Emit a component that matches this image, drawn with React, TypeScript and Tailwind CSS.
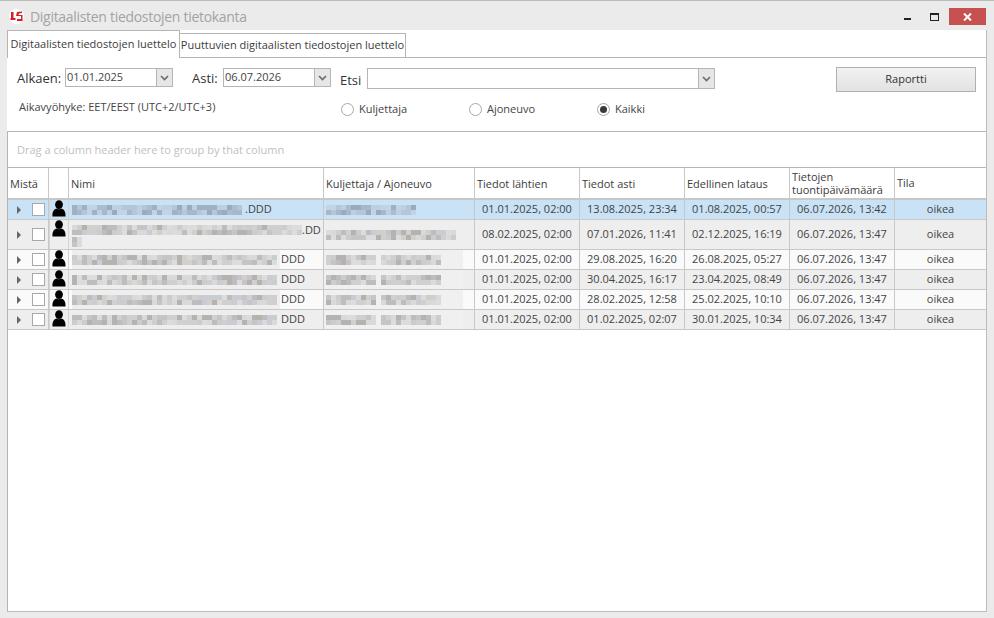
import React from 'react';

const GRID = 'grid grid-cols-[41px_20px_255px_151px_105px_105px_105px_105px_91px]';
const CELL = 'border-r border-[#c8c8c8]';

const LIGHT = ['#d9d9d9', '#cfcfcf', '#c6c4c6', '#bdbcbf', '#d2d0cd', '#c9ccd0', '#b5b2b0', '#dcdcdc'];
const BLUE = ['#a9bdcf', '#b4c7d8', '#9fb2c4', '#bcd0e0', '#a8b8c8', '#c0d4e4', '#98acbe'];

// pixelated stand-in for the censored names
const Mosaic = ({ w, h, seed, palette = LIGHT }: { w: number; h: number; seed: number; palette?: string[] }) => {
  const cols = Math.ceil(w / 5);
  const rows = Math.ceil(h / 5);
  const cells = [];
  for (let i = 0; i < cols * rows; i++) {
    const n = Math.abs(Math.sin((i + 1) * 12.9898 + seed * 78.233) * 43758.5453);
    cells.push(palette[Math.floor(n) % palette.length]);
  }
  return (
    <div className="flex flex-wrap overflow-hidden shrink-0" style={{ width: w, height: h }}>
      {cells.map((c, i) => (
        <div key={i} className="w-[5px] h-[5px]" style={{ background: c }} />
      ))}
    </div>
  );
};

const PersonIcon = () => (
  <svg width="14" height="17" viewBox="0 0 14 17" className="shrink-0">
    <ellipse cx="7" cy="4.6" rx="3.9" ry="4.4" fill="#000" />
    <path d="M0.5 16.5 C0.2 12 1.6 9.6 4.4 8.6 C6 9.6 8 9.6 9.6 8.6 C12.4 9.6 13.8 12 13.5 16.5 Z" fill="#000" />
  </svg>
);

const Chevron = () => (
  <svg width="9" height="6" viewBox="0 0 9 6">
    <path d="M1 1 L4.5 4.5 L8 1" fill="none" stroke="#6b6b6b" strokeWidth="1.6" />
  </svg>
);

const ComboButton = ({ w }: { w: string }) => (
  <div className={`${w} self-stretch bg-[#e6e6e6] border-l border-[#b5b5b5] flex items-center justify-center`}>
    <Chevron />
  </div>
);

const Radio = ({ label, checked }: { label: string; checked?: boolean }) => (
  <div className="flex items-center gap-[5px] w-[128px]">
    <div className="w-[13px] h-[13px] rounded-full border border-[#a8a8a8] bg-white flex items-center justify-center">
      {checked && <div className="w-[7px] h-[7px] rounded-full bg-[#3a3a3a]" />}
    </div>
    <span>{label}</span>
  </div>
);

type Row = {
  h: string;
  bg: string;
  from: string;
  to: string;
  last: string;
  added: string;
  name: React.ReactNode;
  driver: React.ReactNode;
};

const HaloName = ({ w, seed, blockW }: { w: number; seed: number; blockW: number }) => (
  <div className="flex items-center h-full pl-[3px]">
    <div className="bg-[#eeeeee] h-full flex items-center" style={{ width: w }}>
      <Mosaic w={blockW} h={10} seed={seed} />
    </div>
    <span className="ml-[1px]">DDD</span>
  </div>
);

const HaloDriver = ({ seed }: { seed: number }) => (
  <div className="h-full w-[139px] bg-[#f0f0f0] flex items-center pl-[2px]">
    <Mosaic w={50} h={10} seed={seed} />
    <div className="w-[5px]" />
    <Mosaic w={60} h={10} seed={seed + 1} />
  </div>
);

const rows: Row[] = [
  {
    h: 'h-[20px]',
    bg: 'bg-[#c9e2f5]',
    from: '01.01.2025, 02:00',
    to: '13.08.2025, 23:34',
    last: '01.08.2025, 00:57',
    added: '06.07.2026, 13:42',
    name: (
      <div className="flex items-center h-full pl-[3px]">
        <Mosaic w={173} h={10} seed={1} palette={BLUE} />
        <span>.DDD</span>
      </div>
    ),
    driver: (
      <div className="flex items-center h-full pl-[2px]">
        <Mosaic w={90} h={10} seed={2} palette={BLUE} />
      </div>
    ),
  },
  {
    h: 'h-[30px]',
    bg: 'bg-[#eeeeee]',
    from: '08.02.2025, 02:00',
    to: '07.01.2026, 11:41',
    last: '02.12.2025, 16:19',
    added: '06.07.2026, 13:47',
    name: (
      <div className="pl-[3px] pt-[5px]">
        <div className="flex items-center h-[10px]">
          <Mosaic w={230} h={10} seed={3} />
          <span>.DD</span>
        </div>
        <div className="mt-[2px]">
          <Mosaic w={10} h={10} seed={4} />
        </div>
      </div>
    ),
    driver: (
      <div className="flex items-center h-full pl-[2px]">
        <Mosaic w={130} h={10} seed={5} />
      </div>
    ),
  },
  {
    h: 'h-[20px]',
    bg: 'bg-[#fafafa]',
    from: '01.01.2025, 02:00',
    to: '29.08.2025, 16:20',
    last: '26.08.2025, 05:27',
    added: '06.07.2026, 13:47',
    name: <HaloName w={208} seed={6} blockW={205} />,
    driver: <HaloDriver seed={7} />,
  },
  {
    h: 'h-[20px]',
    bg: 'bg-[#eeeeee]',
    from: '01.01.2025, 02:00',
    to: '30.04.2025, 16:17',
    last: '23.04.2025, 08:49',
    added: '06.07.2026, 13:47',
    name: <HaloName w={208} seed={9} blockW={205} />,
    driver: <HaloDriver seed={10} />,
  },
  {
    h: 'h-[20px]',
    bg: 'bg-[#fafafa]',
    from: '01.01.2025, 02:00',
    to: '28.02.2025, 12:58',
    last: '25.02.2025, 10:10',
    added: '06.07.2026, 13:47',
    name: <HaloName w={208} seed={12} blockW={205} />,
    driver: <HaloDriver seed={13} />,
  },
  {
    h: 'h-[20px]',
    bg: 'bg-[#eeeeee]',
    from: '01.01.2025, 02:00',
    to: '01.02.2025, 02:07',
    last: '30.01.2025, 10:34',
    added: '06.07.2026, 13:47',
    name: <HaloName w={208} seed={15} blockW={205} />,
    driver: <HaloDriver seed={16} />,
  },
];

const Head = ({ children }: { children: React.ReactNode }) => (
  <div className={`${CELL} flex items-center pl-[2px] leading-[13px] text-[#3c3c3c]`}>{children}</div>
);

const App = () => {
  return (
    <div className="w-[994px] h-[618px] flex flex-col bg-[#ebebeb] border-t border-[#bdbdbd] overflow-hidden font-['Open_Sans','Noto_Sans',sans-serif] text-[11px] text-[#444444]">
      {/* Title bar */}
      <div className="h-[29px] shrink-0 flex items-center pl-[9px] pt-[1px]">
        <div className="w-[15px] h-[15px] rounded-full bg-white flex items-center justify-center">
          <svg width="13" height="11" viewBox="0 0 13 11">
            <path d="M1 1 V7 H0.5 V9 H5.5 V7 H3.5 V1 Z M7 1 L6 5 H11 V8 H7 V10 H12.5 V4 H8.5 L9 2.5 L12 2 V0.5 Z" fill="#d3202a" />
          </svg>
        </div>
        <span className="ml-[6px] text-[14px] text-[#a3a3a3] tracking-[-0.3px]">Digitaalisten tiedostojen tietokanta</span>
        <div className="ml-auto flex items-start h-full">
          <div className="w-[7px] h-[2px] bg-[#222222] mt-[16px] mr-[19px]" />
          <div className="w-[9px] h-[8px] border border-[#222222] border-t-2 mt-[11px] mr-[10px]" />
          <div className="w-[37px] h-[17px] mt-[6px] mr-[8px] bg-[#c75050] flex items-center justify-center">
            <svg width="9" height="8" viewBox="0 0 9 8">
              <path d="M1 0.5 L8 7.5 M8 0.5 L1 7.5" stroke="#fff" strokeWidth="2" />
            </svg>
          </div>
        </div>
      </div>

      {/* Window body */}
      <div className="mx-[7px] mb-[6px] flex-1 flex flex-col bg-white border-r border-b border-[#bcbcbc] min-h-0">
        {/* Tabs */}
        <div className="h-[28px] shrink-0 flex items-end border-b border-[#b5b5b5] text-[#3c3c3c]">
          <div className="w-[173px] h-[28px] -mb-px bg-white border-x border-t border-[#b5b5b5] flex items-center justify-center pb-[1px] relative">
            Digitaalisten tiedostojen luettelo
          </div>
          <div className="w-[226px] h-[24px] border-r border-t border-[#b5b5b5] flex items-center justify-center">
            Puuttuvien digitaalisten tiedostojen luettelo
          </div>
        </div>

        {/* Filter panel */}
        <div className="h-[74px] shrink-0 border-b border-[#b5b5b5] flex flex-col pl-[10px] pt-[10px] text-[#444444]">
          <div className="flex items-start">
            <span className="text-[13px] leading-[20px] w-[48px] text-[#333333]">Alkaen:</span>
            <div className="w-[108px] h-[19px] border border-[#b5b5b5] flex items-center pl-[1px]">
              <span className="flex-1">01.01.2025</span>
              <ComboButton w="w-[16px]" />
            </div>
            <span className="text-[13px] leading-[20px] w-[31px] ml-[19px] text-[#333333]">Asti:</span>
            <div className="w-[108px] h-[19px] border border-[#b5b5b5] flex items-center pl-[1px]">
              <span className="flex-1">06.07.2026</span>
              <ComboButton w="w-[16px]" />
            </div>
            <span className="text-[13px] leading-[24px] w-[27px] ml-[9px] text-[#333333]">Etsi</span>
            <div className="w-[348px] h-[21px] border border-[#b5b5b5] flex justify-end">
              <ComboButton w="w-[16px]" />
            </div>
            <div className="w-[140px] h-[25px] -mt-[1px] ml-[121px] border border-[#b0b0b0] bg-gradient-to-b from-[#f2f2f2] to-[#e2e2e2] flex items-center justify-center text-[#333333]">
              Raportti
            </div>
          </div>
          <div className="flex items-center mt-[9px]">
            <span className="w-[324px] pl-[2px] -mt-[4px]">Aikavyöhyke: EET/EEST (UTC+2/UTC+3)</span>
            <Radio label="Kuljettaja" />
            <Radio label="Ajoneuvo" />
            <Radio label="Kaikki" checked />
          </div>
        </div>

        {/* Group panel */}
        <div className="h-[36px] shrink-0 flex items-center pl-[9px] pt-[2px] text-[#c0c0c0] border-l border-[#b5b5b5] border-b">
          Drag a column header here to group by that column
        </div>

        {/* Grid */}
        <div className="flex-1 border-l border-[#b5b5b5]">
          <div className={`${GRID} h-[32px] border-b-2 border-[#c8c8c8]`}>
            <Head>Mistä</Head>
            <Head>{''}</Head>
            <Head>Nimi</Head>
            <Head>Kuljettaja / Ajoneuvo</Head>
            <Head>Tiedot lähtien</Head>
            <Head>Tiedot asti</Head>
            <Head>Edellinen lataus</Head>
            <Head>
              <span>Tietojen<br />tuontipäivämäärä</span>
            </Head>
            <div className="flex items-center pl-[2px]">Tila</div>
          </div>
          {rows.map((r, i) => (
            <div key={i} className={`${GRID} ${r.h} ${r.bg} border-b border-[#c8c8c8] box-border`}>
              <div className={`${CELL} flex items-center pl-[9px] gap-[11px]`}>
                <div className="w-0 h-0 border-y-[4px] border-y-transparent border-l-[4px] border-l-[#666666]" />
                <div className="w-[13px] h-[13px] border border-[#a8a8a8] bg-white" />
              </div>
              <div className="border-x border-[#d4d4d4] flex justify-center overflow-hidden">
                <PersonIcon />
              </div>
              <div className={`${CELL} overflow-hidden`}>{r.name}</div>
              <div className={`${CELL} overflow-hidden`}>{r.driver}</div>
              <div className={`${CELL} flex items-center justify-center`}>{r.from}</div>
              <div className={`${CELL} flex items-center justify-center`}>{r.to}</div>
              <div className={`${CELL} flex items-center justify-center`}>{r.last}</div>
              <div className={`${CELL} flex items-center justify-center`}>{r.added}</div>
              <div className="flex items-center justify-center">oikea</div>
            </div>
          ))}
        </div>
      </div>
    </div>
  );
};

export default App;
